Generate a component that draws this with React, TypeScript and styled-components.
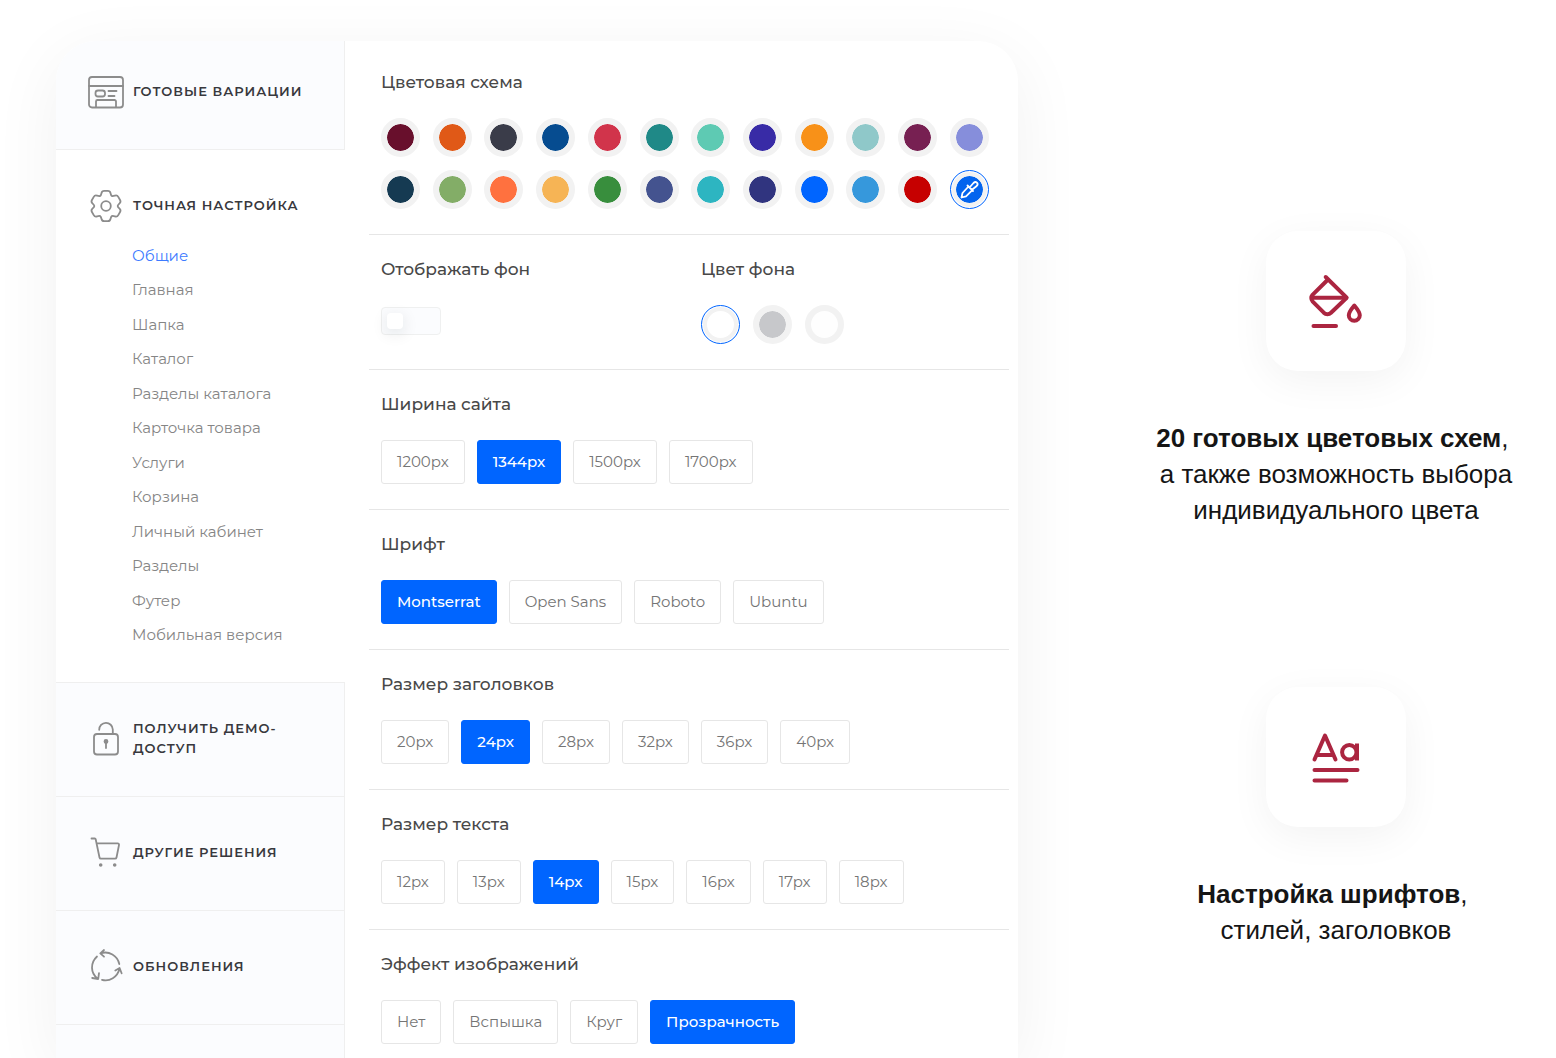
import React, { useState } from "react";
import styled, { createGlobalStyle, css } from "styled-components";

const blue = "#0065ff";
const crimson = "#ab2540";

const GlobalStyle = createGlobalStyle`
  *, *::before, *::after { box-sizing: border-box; }
  body { margin: 0; background: #fff; }
  button, input { font: inherit; margin: 0; }
`;

const Page = styled.div`
  display: flex;
  height: 100vh;
  padding: 41px 0 0 56px;
  overflow: hidden;
  background: #fff;
  font-family: Montserrat, Inter, "Open Sans", sans-serif;
`;

const Panel = styled.main`
  display: flex;
  flex: 0 1 962px;
  min-width: 0;
  background: #fff;
  border-radius: 40px 40px 0 0;
  box-shadow: 0 16px 70px rgba(0, 0, 0, 0.06);
`;

const Sidebar = styled.nav`
  display: flex;
  flex-direction: column;
  flex: 0 0 289px;
  overflow: hidden;
  border-top-left-radius: 40px;
`;

const SidebarItem = styled.div<{ $first?: boolean }>`
  flex-shrink: 0;
  padding: ${(p) => (p.$first ? "33px 0 39px 32px" : "38px 0 39px 32px")};
  background: #fbfcfe;
  border: 0 solid #efefef;
  border-width: ${(p) => (p.$first ? "0 1px 1px 0" : "1px 1px 0 0")};
`;

const SidebarGroup = styled.div`
  flex-shrink: 0;
  padding: 38px 0 37px 32px;
`;

const SidebarRest = styled.div`
  flex: 1 0 0;
  background: #fbfcfe;
  border: 0 solid #efefef;
  border-width: 1px 1px 0 0;
`;

const SidebarLink = styled.a`
  display: flex;
  align-items: center;
  gap: 9px;
  height: 36px;
  padding-right: 40px;
  padding-bottom: 2px;
  color: #38383d;
  font-size: 13px;
  font-weight: 600;
  line-height: 20px;
  letter-spacing: 1px;
  text-transform: uppercase;
  text-decoration: none;
`;

const SideIcon = styled.svg`
  flex: 0 0 36px;
  width: 36px;
  height: 36px;
  fill: none;
  stroke: #8c8c8c;
  stroke-width: 1.8;
  stroke-linecap: round;
  stroke-linejoin: round;
`;

const SubMenu = styled.ul`
  display: flex;
  flex-direction: column;
  justify-content: space-between;
  height: 399px;
  margin: 22px 0 0;
  padding: 0 0 0 44px;
  list-style: none;
`;

const SubLink = styled.a<{ $active?: boolean }>`
  display: block;
  color: ${(p) => (p.$active ? "#3d7bff" : "#858585")};
  font-size: 15px;
  line-height: 20px;
  text-decoration: none;
`;

const Settings = styled.div`
  flex: 1 1 0;
  min-width: 0;
  padding: 7px 9px 0 24px;
`;

const Section = styled.section`
  display: grid;
  grid-auto-flow: column;
  grid-auto-columns: 1fr;
  padding: 24px 0 25px;
  border-bottom: 1px solid #e6e6e6;
`;

const Block = styled.div`
  padding: 0 20px 0 12px;
`;

const Title = styled.h2`
  display: block;
  margin: 0 0 26px;
  color: #484848;
  font-size: 17px;
  font-weight: 500;
  line-height: 20px;
`;

const SwatchGrid = styled.div`
  display: grid;
  grid-template-columns: repeat(12, 39px);
  justify-content: space-between;
  row-gap: 13px;
`;

const SwatchRow = styled.div`
  display: flex;
  gap: 13px;
`;

const Swatch = styled.input<{ $color: string }>`
  appearance: none;
  display: block;
  width: 39px;
  height: 39px;
  border: 6px solid #f2f2f2;
  border-radius: 50%;
  background: ${(p) => p.$color} padding-box;
  cursor: pointer;

  &:checked {
    border: 1px solid ${blue};
    padding: 5px;
    background: ${(p) => p.$color} content-box;
    box-shadow: inset 0 0 0 1px #fff, inset 0 0 0 5px #f2f2f2;
  }
`;

const Picker = styled.label`
  position: relative;
  display: block;
  width: 39px;
  height: 39px;
`;

const PickerIcon = styled.svg`
  position: absolute;
  inset: 0;
  width: 39px;
  height: 39px;
  fill: none;
  stroke: #fff;
  stroke-width: 1.8;
  stroke-linecap: round;
  stroke-linejoin: round;
  pointer-events: none;
`;

const Toggle = styled.input`
  appearance: none;
  display: block;
  width: 60px;
  height: 28px;
  margin-top: 28px;
  padding: 5px;
  border: 1px solid #eff0f0;
  border-radius: 4px;
  background: #fbfcfe;
  cursor: pointer;

  &::before {
    content: "";
    display: block;
    width: 16px;
    height: 16px;
    border-radius: 4px;
    background: #fff;
    box-shadow: 0 4px 16px rgba(0, 30, 30, 0.12);
  }

  &:checked::before {
    margin-left: auto;
    background: ${blue};
  }
`;

const Options = styled.div`
  display: flex;
  flex-wrap: wrap;
  gap: 12px;
`;

const Option = styled.button<{ $active: boolean }>`
  height: 44px;
  padding: 0 15px;
  border: 1px solid #e6e6e6;
  border-radius: 3px;
  background: #fff;
  color: #757575;
  font-size: 15px;
  line-height: 20px;
  cursor: pointer;
  ${(p) =>
    p.$active &&
    css`
      border-color: ${blue};
      background: ${blue};
      color: #fff;
      font-weight: 500;
    `}
`;

const Features = styled.aside`
  display: flex;
  flex-direction: column;
  align-items: center;
  gap: 159px;
  flex: 1 1 0;
  padding: 190px 0 0 98px;
  color: #151515;
  font-family: "Liberation Sans", Arial, sans-serif;
`;

const Feature = styled.div`
  display: flex;
  flex-direction: column;
  align-items: center;
  gap: 49px;
`;

const Tile = styled.div`
  display: flex;
  align-items: center;
  justify-content: center;
  width: 140px;
  height: 140px;
  border-radius: 32px;
  background: #fff;
  box-shadow: 0 10px 40px rgba(0, 0, 0, 0.05);
`;

const TileIcon = styled.svg`
  width: 56px;
  height: 56px;
  fill: none;
  stroke: ${crimson};
  stroke-width: 4;
  stroke-linecap: round;
  stroke-linejoin: round;
`;

const FeatureText = styled.p`
  margin: 0;
  font-size: 26px;
  line-height: 36px;
  text-align: center;
`;

type Point = [number, number];

const toothCorners: Point[] = [
  [-5, -10.6],
  [-4, -15.2],
  [4, -15.2],
  [5, -10.6],
];

const gearCorners: Point[] = Array.from({ length: 6 }, (_, i) => {
  const a = (i * Math.PI) / 3;
  return toothCorners.map(
    ([x, y]): Point => [18 + x * Math.cos(a) - y * Math.sin(a), 18 + x * Math.sin(a) + y * Math.cos(a)],
  );
}).flat();

/* Closed outline through the corners, each one rounded by at most r. */
function roundedOutline(points: Point[], r: number) {
  const toward = (from: Point, to: Point): Point => {
    const length = Math.hypot(to[0] - from[0], to[1] - from[1]);
    const t = Math.min(r / length, 0.5);
    return [from[0] + (to[0] - from[0]) * t, from[1] + (to[1] - from[1]) * t];
  };
  return (
    points
      .map((p, i) => {
        const before = toward(p, points[(i + points.length - 1) % points.length]);
        const after = toward(p, points[(i + 1) % points.length]);
        return `${i ? "L" : "M"}${before} Q${p} ${after}`;
      })
      .join(" ") + "Z"
  );
}

const WindowIcon = () => (
  <SideIcon viewBox="0 0 36 36" aria-hidden="true">
    <rect x="1" y="4" width="34" height="30.5" rx="3" />
    <path d="M1 13h34" />
    <rect x="7.5" y="17.5" width="9.5" height="6" rx="2.5" />
    <path d="M20.5 18h8M20.5 23h6M8 34v-5.500a1.500 1.500 0 0 1 1.500-1.500h17a1.500 1.500 0 0 1 1.500 1.500V34" />
  </SideIcon>
);

const GearIcon = () => (
  <SideIcon viewBox="0 -1 36 36" aria-hidden="true">
    <path d={roundedOutline(gearCorners, 2.2)} />
    <circle cx="18" cy="18" r="4.8" />
  </SideIcon>
);

const LockIcon = () => (
  <SideIcon viewBox="0 0 36 36" aria-hidden="true">
    <rect x="6" y="14" width="24" height="20.5" rx="3" />
    <path d="M11.200 9.800A6.800 6.800 0 0 1 24.800 9.500V14M18 22v6" />
    <circle cx="18" cy="21.500" r="1.500" fill="#8c8c8c" />
  </SideIcon>
);

const CartIcon = () => (
  <SideIcon viewBox="0 0 36 36" aria-hidden="true">
    <path d="M3.500 4.500h3.200a1 1 0 0 1 1 .8L11.500 23.500a1.500 1.500 0 0 0 1.500 1.200h14a1.500 1.500 0 0 0 1.500-1.200L31 11a1.300 1.300 0 0 0-1.300-1.600H8.800" />
    <circle cx="12.700" cy="31" r="0.900" fill="#8c8c8c" />
    <circle cx="26.700" cy="31" r="0.900" fill="#8c8c8c" />
  </SideIcon>
);

const RefreshIcon = () => (
  <SideIcon viewBox="0 0 36 36" aria-hidden="true">
    <path d="M12.500 5.300C21 2.500 29.500 7.500 31.300 16M16 2l-3.700 3.300L16 8.700" />
    <path d="M9 8.500C2 15 2.500 25 9.500 30.500M11 25.200l-.8 5.800-6-1" />
    <path d="M14 31.800c7.500 2 15.500-2.500 17.500-11M27.300 22.500l4.300-2.500 2 5.300" />
  </SideIcon>
);

const BucketIcon = () => (
  <TileIcon viewBox="0 0 56 56" aria-hidden="true">
    <path d="M17.700 4 L38.700 24.700 L23 39.700 a5.200 5.200 0 0 1-7.200 0 L4.500 28.300 a5 5 0 0 1 0-6.500 L20 6.500" />
    <path d="M4 24.700H38" />
    <path d="M5.500 53H28" />
    <path d="M46.300 32.500C43.500 35.800 40.800 39 40.800 42.300a5.500 5.500 0 0 0 11 0C51.800 39 49.100 35.800 46.300 32.500Z" />
  </TileIcon>
);

const TypeIcon = () => (
  <TileIcon viewBox="0 0 56 56" aria-hidden="true">
    <path d="M6.500 30.500L17 6.500l10.500 24M9.500 26h15" />
    <circle cx="41.300" cy="23.300" r="7.200" />
    <path d="M49 14.500v17" strokeLinecap="butt" />
    <path d="M6.500 41h43M6.500 51.500h32" />
  </TileIcon>
);

const palette: [string, string][] = [
  ["Бордовый", "#680f2c"],
  ["Оранжевый", "#e05917"],
  ["Графитовый", "#3a3c49"],
  ["Синий", "#064c90"],
  ["Малиновый", "#d1344b"],
  ["Бирюзовый", "#1f8987"],
  ["Мятный", "#5ecab3"],
  ["Фиолетовый", "#382ba6"],
  ["Янтарный", "#f89118"],
  ["Голубой туман", "#8fc8c9"],
  ["Сливовый", "#772052"],
  ["Лавандовый", "#868edb"],
  ["Тёмно-синий", "#153a52"],
  ["Оливковый", "#83ad67"],
  ["Коралловый", "#ff713f"],
  ["Песочный", "#f6b455"],
  ["Зелёный", "#388e3d"],
  ["Сизый", "#44538f"],
  ["Морской", "#2db5c1"],
  ["Индиго", "#30347f"],
  ["Ярко-синий", "#0065ff"],
  ["Голубой", "#3698dc"],
  ["Красный", "#c60000"],
];

const backgrounds: [string, string][] = [
  ["Белый", "#ffffff"],
  ["Серый", "#c7c8cb"],
  ["Прозрачный", "#fefefe"],
];

const subMenu = [
  "Общие",
  "Главная",
  "Шапка",
  "Каталог",
  "Разделы каталога",
  "Карточка товара",
  "Услуги",
  "Корзина",
  "Личный кабинет",
  "Разделы",
  "Футер",
  "Мобильная версия",
];

const choices = [
  { title: "Ширина сайта", items: ["1200px", "1344px", "1500px", "1700px"], initial: "1344px" },
  { title: "Шрифт", items: ["Montserrat", "Open Sans", "Roboto", "Ubuntu"], initial: "Montserrat" },
  { title: "Размер заголовков", items: ["20px", "24px", "28px", "32px", "36px", "40px"], initial: "24px" },
  { title: "Размер текста", items: ["12px", "13px", "14px", "15px", "16px", "17px", "18px"], initial: "14px" },
  { title: "Эффект изображений", items: ["Нет", "Вспышка", "Круг", "Прозрачность"], initial: "Прозрачность" },
];

function ChoiceSection({ title, items, initial }: { title: string; items: string[]; initial: string }) {
  const [value, setValue] = useState(initial);
  return (
    <Section>
      <Block>
        <Title>{title}</Title>
        <Options role="group" aria-label={title}>
          {items.map((item) => (
            <Option
              key={item}
              type="button"
              $active={item === value}
              aria-pressed={item === value}
              onClick={() => setValue(item)}
            >
              {item}
            </Option>
          ))}
        </Options>
      </Block>
    </Section>
  );
}

export default function App() {
  return (
    <>
      <GlobalStyle />
      <Page>
        <Panel>
          <Sidebar>
            <SidebarItem $first>
              <SidebarLink href="#variants">
                <WindowIcon />
                Готовые вариации
              </SidebarLink>
            </SidebarItem>
            <SidebarGroup>
              <SidebarLink href="#tuning">
                <GearIcon />
                Точная настройка
              </SidebarLink>
              <SubMenu>
                {subMenu.map((label, i) => (
                  <li key={label}>
                    <SubLink href={`#section-${i}`} $active={i === 0}>
                      {label}
                    </SubLink>
                  </li>
                ))}
              </SubMenu>
            </SidebarGroup>
            <SidebarItem>
              <SidebarLink href="#demo">
                <LockIcon />
                Получить демо-доступ
              </SidebarLink>
            </SidebarItem>
            <SidebarItem>
              <SidebarLink href="#solutions">
                <CartIcon />
                Другие решения
              </SidebarLink>
            </SidebarItem>
            <SidebarItem>
              <SidebarLink href="#updates">
                <RefreshIcon />
                Обновления
              </SidebarLink>
            </SidebarItem>
            <SidebarRest />
          </Sidebar>

          <Settings>
            <Section>
              <Block>
                <Title>Цветовая схема</Title>
                <SwatchGrid role="radiogroup" aria-label="Цветовая схема">
                  {palette.map(([name, color]) => (
                    <Swatch key={name} type="radio" name="scheme" aria-label={name} $color={color} />
                  ))}
                  <Picker>
                    <Swatch type="radio" name="scheme" aria-label="Свой цвет" $color="#0364ee" defaultChecked />
                    <PickerIcon viewBox="0 0 39 39" aria-hidden="true">
                      <path d="M18.500 16.500l-6 6.500-1 4.500 4.500-1.200 6-6M17.500 15.500l5.500 5.500M19.500 17.500l4-4.500c2.500-2.500 5.500.5 3.200 3l-4.700 3.800" />
                    </PickerIcon>
                  </Picker>
                </SwatchGrid>
              </Block>
            </Section>
            <Section>
              <Block>
                <Title as="label" htmlFor="show-bg">
                  Отображать фон
                </Title>
                <Toggle id="show-bg" type="checkbox" />
              </Block>
              <Block>
                <Title>Цвет фона</Title>
                <SwatchRow role="radiogroup" aria-label="Цвет фона">
                  {backgrounds.map(([name, color], i) => (
                    <Swatch
                      key={name}
                      type="radio"
                      name="background"
                      aria-label={name}
                      $color={color}
                      defaultChecked={i === 0}
                    />
                  ))}
                </SwatchRow>
              </Block>
            </Section>
            {choices.map((choice) => (
              <ChoiceSection key={choice.title} {...choice} />
            ))}
          </Settings>
        </Panel>

        <Features>
          <Feature>
            <Tile>
              <BucketIcon />
            </Tile>
            <FeatureText>
              <strong>20 готовых цветовых схем</strong>,&nbsp;
              <br />а также возможность выбора
              <br />
              индивидуального цвета
            </FeatureText>
          </Feature>
          <Feature>
            <Tile>
              <TypeIcon />
            </Tile>
            <FeatureText>
              <strong>Настройка шрифтов</strong>,&nbsp;
              <br />
              стилей, заголовков
            </FeatureText>
          </Feature>
        </Features>
      </Page>
    </>
  );
}
